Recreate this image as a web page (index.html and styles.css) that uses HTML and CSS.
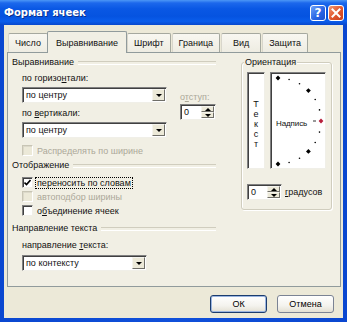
FILE: index.html
```html
<!DOCTYPE html>
<html lang="ru">
<head>
<meta charset="utf-8">
<title>Формат ячеек</title>
<link rel="stylesheet" href="styles.css">
</head>
<body>
<div class="window">
  <div class="titlebar">
    <span class="title">Формат ячеек</span>
    <span class="tbtn help">?</span>
    <span class="tbtn close"><svg width="10" height="10" viewBox="0 0 10 10"><path d="M1.5 1.5 L8.5 8.5 M8.5 1.5 L1.5 8.5" stroke="#fff" stroke-width="2" stroke-linecap="square"/></svg></span>
  </div>
  <div class="body">
    <div class="tabs">
      <span class="tab">Число</span>
      <span class="tab sel">Выравнивание</span>
      <span class="tab">Шрифт</span>
      <span class="tab">Граница</span>
      <span class="tab">Вид</span>
      <span class="tab">Защита</span>
    </div>
    <div class="panel">
      <div class="left">
        <div class="gh g1"><span>Выравнивание</span></div>
        <div class="align-row">
          <div class="col-a">
            <div class="lbl">по горизо<u>н</u>тали:</div>
            <div class="select s-w1"><span class="val">по центру</span><span class="drop"><i></i></span></div>
            <div class="lbl l2">по <u>в</u>ертикали:</div>
            <div class="select s-w1"><span class="val">по центру</span><span class="drop"><i></i></span></div>
          </div>
          <div class="col-b">
            <div class="lbl dis">о<u>т</u>ступ:</div>
            <div class="spin"><span class="val">0</span><span class="arrows"><span class="ar up"><i></i></span><span class="ar dn"><i></i></span></span></div>
          </div>
        </div>
        <div class="cb-row dis r-distr"><span class="cb"></span><span class="cbt">Распределять по ширине</span></div>
        <div class="gh g2"><span>Отображение</span></div>
        <div class="cb-row r1"><span class="cb on"><svg width="7" height="7" viewBox="0 0 7 7"><path d="M0.5 3.5 L2.5 5.5 L6.5 1" fill="none" stroke="#000" stroke-width="1.6"/></svg></span><span class="cbt focus">переносить по словам</span></div>
        <div class="cb-row dis r2"><span class="cb"></span><span class="cbt">автоподбор ширины</span></div>
        <div class="cb-row r3"><span class="cb"></span><span class="cbt">о<u>б</u>ъединение ячеек</span></div>
        <div class="gh g3"><span>Направление текста</span></div>
        <div class="lbl l3">направление <u>т</u>екста:</div>
        <div class="select s-w2"><span class="val">по контексту</span><span class="drop"><i></i></span></div>
      </div>
      <div class="orient">
        <span class="legend">Ориентация</span>
        <div class="boxes">
          <div class="vbox"><span>Т</span><span>е</span><span>к</span><span>с</span><span>т</span></div>
          <div class="arcbox">
            <svg class="arc" width="54" height="95" viewBox="0 0 54 95">
              <g fill="#000">
                <path d="M7 2.6 L9.4 5 L7 7.4 L4.6 5 Z"/>
                <circle cx="18.1" cy="6.5" r="0.8"/>
                <circle cx="28.5" cy="10.8" r="0.8"/>
                <path d="M37.4 15.2 L39.8 17.6 L37.4 20 L35 17.6 Z"/>
                <circle cx="44.2" cy="26.5" r="0.8"/>
                <circle cx="48.5" cy="36.9" r="0.8"/>
                <circle cx="48.5" cy="59.1" r="0.8"/>
                <circle cx="44.2" cy="69.5" r="0.8"/>
                <path d="M37.4 76 L39.8 78.4 L37.4 80.8 L35 78.4 Z"/>
                <circle cx="28.5" cy="85.2" r="0.8"/>
                <circle cx="18.1" cy="89.5" r="0.8"/>
                <path d="M7 88.6 L9.4 91 L7 93.4 L4.6 91 Z"/>
              </g>
              <path d="M42 48 H45" stroke="#333" stroke-width="1"/>
              <path d="M50 45.6 L52.4 48 L50 50.4 L47.6 48 Z" fill="#B8203C"/>
            </svg>
            <span class="caption">Надпись</span>
          </div>
        </div>
        <div class="deg-row">
          <div class="spin s-deg"><span class="val">0</span><span class="arrows"><span class="ar up"><i></i></span><span class="ar dn"><i></i></span></span></div>
          <span class="deg"><u>г</u>радусов</span>
        </div>
      </div>
    </div>
    <div class="footer">
      <button class="btn def">ОК</button>
      <button class="btn">Отмена</button>
    </div>
  </div>
</div>
</body>
</html>
```
FILE: styles.css
```css
* { box-sizing: border-box; }
html, body { margin: 0; padding: 0; }
body {
  font-family: "Liberation Sans", Arial, sans-serif;
  font-size: 9px;
  color: #111;
  background: #fff;
}
u { text-decoration: underline; text-underline-offset: 1px; }

.window {
  width: 347px;
  height: 322px;
  background: linear-gradient(to right, #0A47D0, #1050DA 50%, #0A47D0);
  display: flex;
  flex-direction: column;
}

.titlebar {
  height: 25px;
  flex: none;
  display: flex;
  align-items: center;
  padding: 0 3px 0 4px;
  background: linear-gradient(to bottom, #4C97F6 0, #1C68EC 12%, #0A58E4 35%, #0553E0 65%, #0A5DEB 85%, #0848CC 100%);
}
.title {
  font-family: "DejaVu Sans", Verdana, sans-serif;
  font-weight: bold;
  font-size: 10px;
  color: #fff;
  text-shadow: 1px 1px 0 #0A2F8C;
  flex: 1;
}
.tbtn {
  width: 16px;
  height: 16px;
  border: 1px solid #fff;
  border-radius: 3px;
  display: flex;
  align-items: center;
  justify-content: center;
  color: #fff;
  margin-left: 2px;
}
.help {
  background: linear-gradient(135deg, #6FA4F8, #2A66E6 55%, #1A4FD0);
  font-family: "DejaVu Sans", Verdana, sans-serif;
  font-weight: bold;
  font-size: 12px;
  line-height: 1;
}
.close {
  background: linear-gradient(135deg, #F09A76, #E2582F 50%, #C8401E);
}

.body {
  flex: 1;
  margin: 0 4px 4px 4px;
  background: #ECE9D8;
  display: flex;
  flex-direction: column;
}

.tabs {
  height: 27px;
  flex: none;
  display: flex;
  align-items: flex-end;
  padding-left: 4px;
}
.tab {
  height: 19px;
  min-width: 40px;
  padding: 0 6px;
  display: flex;
  align-items: center;
  justify-content: center;
  background: linear-gradient(#F8F7F1, #EEECE2);
  border: 1px solid #A5A89F;
  border-bottom: none;
  border-left-color: #D8D6CB;
  border-radius: 2px 2px 0 0;
  margin-right: 1px;
}
.tab.sel {
  height: 22px;
  margin: 0 -1px -1px -2px;
  padding: 0 8px;
  background: #F1EFE4;
  border-color: #919B9C;
  position: relative;
  z-index: 1;
}
.tab.sel + .tab { margin-left: 1px; }

.panel {
  height: 235px;
  flex: none;
  margin: 0 2px 0 3px;
  border: 1px solid #919B9C;
  background: #F1EFE4;
  display: flex;
}

.left {
  width: 208px;
  padding-left: 4px;
  display: flex;
  flex-direction: column;
}
.gh {
  display: flex;
  align-items: center;
  height: 11px;
  line-height: 11px;
}
.gh::after {
  content: "";
  flex: 1;
  height: 2px;
  border-top: 1px solid #D0CDBE;
  border-bottom: 1px solid #fff;
  margin-left: 4px;
}
.g1 { margin-top: 4px; }
.g2 { margin-top: 4px; }
.g3 { margin-top: 7px; }

.lbl {
  height: 11px;
  line-height: 11px;
  white-space: nowrap;
}
.dis, .dis .cbt { color: #ACA899; }

.align-row {
  display: flex;
  margin-top: 5px;
  padding-left: 10px;
}
.col-a { width: 145px; display: flex; flex-direction: column; }
.col-a .select { margin-top: 3px; }
.col-a .l2 { margin-top: 5px; }
.col-b { margin-left: 13px; margin-top: 19px; display: flex; flex-direction: column; }
.col-b .spin { margin-top: 1px; width: 36px; }

.select {
  height: 16px;
  background: #fff;
  border: 1px solid;
  border-color: #808080 #F0EFE8 #F0EFE8 #808080;
  box-shadow: inset 1px 1px 0 #404040;
  display: flex;
  align-items: stretch;
  padding: 1px 1px 1px 2px;
}
.s-w1 { width: 145px; }
.s-w2 { width: 125px; margin-left: 10px; margin-top: 4px; }
.select .val, .spin .val {
  flex: 1;
  line-height: 13px;
  padding-left: 1px;
}
.drop {
  width: 13px;
  background: #ECE9D8;
  border: 1px solid;
  border-color: #F5F4EE #6F6E68 #6F6E68 #F5F4EE;
  display: flex;
  align-items: center;
  justify-content: center;
}
.drop i {
  width: 0; height: 0;
  border-left: 3px solid transparent;
  border-right: 3px solid transparent;
  border-top: 3px solid #000;
}

.spin {
  height: 16px;
  background: #fff;
  border: 1px solid;
  border-color: #808080 #F0EFE8 #F0EFE8 #808080;
  box-shadow: inset 1px 1px 0 #404040;
  display: flex;
  padding: 1px 1px 1px 2px;
}
.arrows { width: 13px; display: flex; flex-direction: column; }
.ar {
  flex: 1;
  background: #ECE9D8;
  border: 1px solid;
  border-color: #F5F4EE #6F6E68 #6F6E68 #F5F4EE;
  display: flex;
  align-items: center;
  justify-content: center;
}
.ar i { width: 0; height: 0; border-left: 3px solid transparent; border-right: 3px solid transparent; }
.up i { border-bottom: 3px solid #000; }
.dn i { border-top: 3px solid #000; }

.cb-row {
  display: flex;
  align-items: center;
  height: 11px;
  padding-left: 10px;
}
.r-distr { margin-top: 7px; }
.r1 { margin-top: 6px; }
.r2 { margin-top: 3px; }
.r3 { margin-top: 3px; }
.cb {
  width: 11px;
  height: 11px;
  flex: none;
  background: #fff;
  border: 1px solid;
  border-color: #808080 #F0EFE8 #F0EFE8 #808080;
  box-shadow: inset 1px 1px 0 #404040;
  display: flex;
  align-items: center;
  justify-content: center;
}
.dis .cb {
  background: #ECE9D8;
  border-color: #C8C5B5 #fff #fff #C8C5B5;
  box-shadow: inset 1px 1px 0 #DCD9CA;
}
.cbt {
  margin-left: 2px;
  padding: 0 1px;
  line-height: 10px;
  border: 1px solid transparent;
  white-space: nowrap;
}
.cbt.focus { border: 1px dotted #000; }

.l3 { margin-top: 6px; padding-left: 10px; }

.orient {
  width: 91px;
  height: 148px;
  margin-left: 25px;
  margin-top: 9px;
  border: 1px solid #D0CDBE;
  border-radius: 3px;
  box-shadow: 1px 1px 0 #fff, inset 1px 1px 0 #fff;
  display: flex;
  flex-direction: column;
}
.legend {
  align-self: flex-start;
  margin: -6px 0 0 2px;
  padding: 0 1px;
  line-height: 11px;
  height: 11px;
  background: #F1EFE4;
}
.boxes {
  display: flex;
  margin: 4px 0 0 5px;
  gap: 5px;
}
.vbox, .arcbox {
  height: 97px;
  background: #fff;
  border: 1px solid;
  border-color: #808080 #F0EFE8 #F0EFE8 #808080;
  box-shadow: inset 1px 1px 0 #404040;
}
.vbox {
  width: 18px;
  display: flex;
  flex-direction: column;
  align-items: center;
  justify-content: center;
  padding-top: 6px;
}
.vbox span { line-height: 10px; height: 10px; }
.arcbox {
  width: 56px;
  position: relative;
}
.arc { position: absolute; left: 0; top: 0; }
.caption {
  position: absolute;
  left: 5px;
  top: 45px;
  font-size: 8px;
  letter-spacing: -0.1px;
  line-height: 11px;
}
.deg-row {
  display: flex;
  align-items: center;
  margin: 15px 0 0 5px;
}
.s-deg { width: 35px; }
.deg { margin-left: 3px; }

.footer {
  flex: 1;
  display: flex;
  justify-content: flex-end;
  align-items: flex-start;
  gap: 10px;
  padding: 8px 9px 0 0;
}
.btn {
  width: 57px;
  height: 18px;
  font: inherit;
  font-size: 9px;
  color: #000;
  padding: 0;
  border: 1px solid #7B8394;
  border-radius: 3px;
  background: linear-gradient(#FFFFFF, #F4F3EE 60%, #E3E0D3);
}
.btn.def {
  border-color: #1B3C6E;
  box-shadow: inset 0 0 0 1px #9BB5E0;
}
```
